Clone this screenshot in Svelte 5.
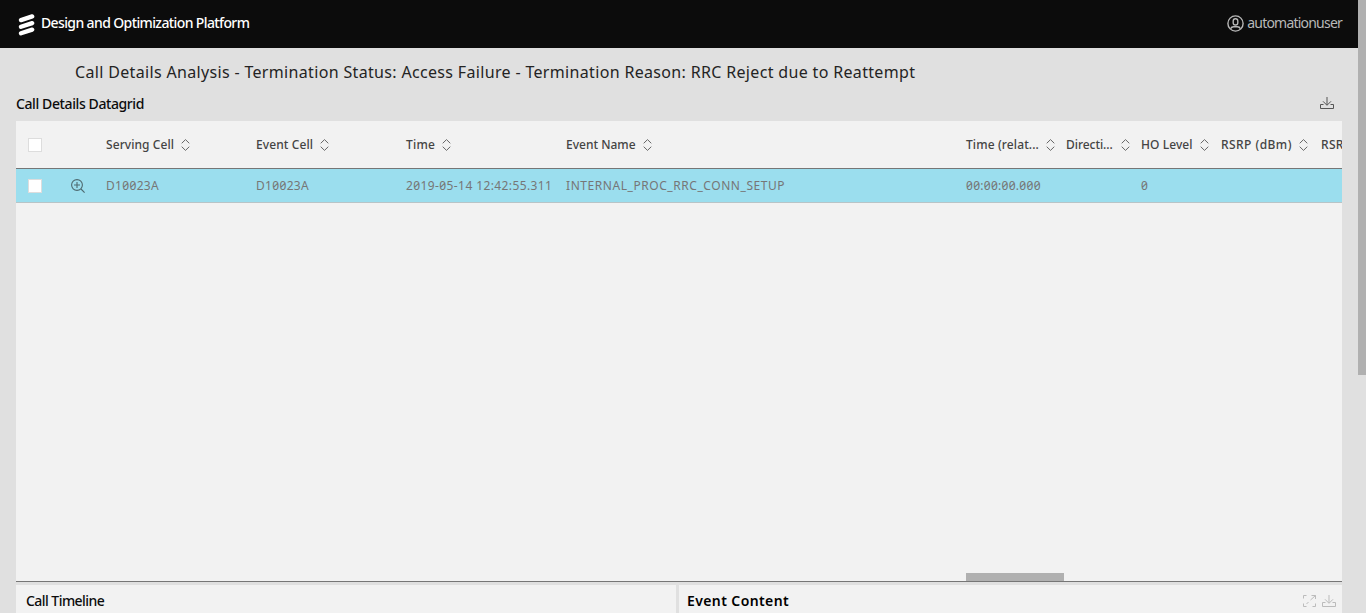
<script>
  const columns = [
    { name: 'Serving Cell', width: 150, value: 'D10023A', ls: 0.07, vls: 0.32 },
    { name: 'Event Cell', width: 150, value: 'D10023A', ls: 0.1, vls: 0.32 },
    { name: 'Time', width: 160, value: '2019-05-14 12:42:55.311', ls: 0.2, vls: 0.4 },
    { name: 'Event Name', width: 400, value: 'INTERNAL_PROC_RRC_CONN_SETUP', ls: 0, vls: 0.56 },
    { name: 'Time (relat...', width: 100, value: '00:00:00.000', ls: 0.12, vls: 0.28, clipped: true },
    { name: 'Directi...', width: 75, value: '', ls: -0.05, vls: 0, clipped: true },
    { name: 'HO Level', width: 80, value: '0', ls: 0.07, vls: 0 },
    { name: 'RSRP (dBm)', width: 100, value: '', ls: 0.45, vls: 0 },
    { name: 'RSRQ (dB)', width: 100, value: '', ls: 0.3, vls: 0 }
  ];
</script>

{#snippet download()}
  <svg class="download" width="14" height="12" viewBox="0 0 14 12" fill="none" stroke="currentColor">
    <path d="M3.5 7.5H.5v4h13v-4h-3M7 0v8M3 4.3l4 4 4-4" />
  </svg>
{/snippet}

<div class="page">
  <div class="main">
    <header>
      <svg class="logo" width="18" height="22" viewBox="0 0 18 22" stroke="#fff" stroke-width="4.3" stroke-linecap="round">
        <path d="M3 6.1 14.2 2.4M3 12.8 14.2 9.1M3 19.3 14.2 15.6" />
      </svg>
      <span class="brand">Design and Optimization Platform</span>
      <div class="user">
        <svg width="17" height="17" viewBox="0 0 17 17" fill="none" stroke="currentColor" stroke-width="1.4">
          <circle cx="8.5" cy="8.5" r="7.6" />
          <rect x="6.2" y="3.8" width="4.6" height="6.2" rx="2.2" />
          <path d="M3.6 13.8c.6-1.5 1.7-2 3-2h3.8c1.3 0 2.4.5 3 2" />
        </svg>
        <span>automationuser</span>
      </div>
    </header>

    <h1>Call Details Analysis - Termination Status: Access Failure - Termination Reason: RRC Reject due to Reattempt</h1>

    <div class="caption">
      <h2>Call Details Datagrid</h2>
      {@render download()}
    </div>

    <section class="grid">
      <div class="row head">
        <div class="check"><i></i></div>
        <div class="zoom"></div>
        {#each columns as col}
          <div class="cell" class:clipped={col.clipped} style:width="{col.width}px">
            <span style:letter-spacing="{col.ls}px">{col.name}</span>
            <svg width="9" height="12" viewBox="0 0 9 12" fill="none" stroke="#666" stroke-width="1">
              <path d="M.7 4.3 4.5.6l3.8 3.7M.7 7.7l3.8 3.7 3.8-3.7" />
            </svg>
          </div>
        {/each}
      </div>
      <div class="row data">
        <div class="check"><i></i></div>
        <div class="zoom">
          <svg width="14" height="14" viewBox="0 0 14 14" fill="none" stroke="#4e6a70" stroke-width="1.1">
            <circle cx="6" cy="6" r="5.4" /><path d="M10 10l3.6 3.6M3 6h6M6 3v6" />
          </svg>
        </div>
        {#each columns as col}
          <div class="cell" style:width="{col.width}px"><span style:letter-spacing="{col.vls}px">{col.value}</span></div>
        {/each}
      </div>
      <div class="hscroll"></div>
    </section>

    <div class="panels">
      <section class="timeline"><h2>Call Timeline</h2></section>
      <section class="content">
        <h2>Event Content</h2>
        <div class="tools">
          <svg width="13" height="12" viewBox="0 0 13 12" fill="none" stroke="currentColor">
            <path d="M.5 3.5v-3h3M.5 8.5v3h3M12.500 8.5v3h-3M8.500.5h4v3.500M7.500 5l5-4.500M5.500 7l-2 2" />
          </svg>
          {@render download()}
        </div>
      </section>
    </div>
  </div>
  <div class="vscroll"></div>
</div>

<style>
  :global(body) { margin: 0; overflow: hidden; background: #e0e0e0; }
  .page { display: flex; width: 1366px; height: 613px; overflow: hidden; background: #e0e0e0; font-family: "Noto Sans", sans-serif; color: #0c0c0c; }
  .main { width: 1358px; display: flex; flex-direction: column; }
  .vscroll { width: 8px; height: 375px; background: #b0b0b0; }
  header { height: 48px; flex: none; display: flex; align-items: center; background: #0c0c0c; color: #fff; padding: 0 16px 3px 18px; box-sizing: border-box; }
  .logo { margin-top: 4px; }
  .brand { margin-left: 5px; font-size: 14px; font-weight: 500; letter-spacing: -.62px; white-space: nowrap; }
  .user { margin-left: auto; display: flex; align-items: center; gap: 3px; color: #b8b8b8; font-size: 14px; letter-spacing: -.79px; }
  .user svg { margin-top: 2px; }
  h1, h2 { margin: 0; white-space: nowrap; }
  h1 { height: 48px; flex: none; padding-left: 75px; font-size: 16px; line-height: 48px; font-weight: 400; letter-spacing: .335px; color: #242424; }
  .caption { height: 25px; flex: none; display: flex; justify-content: space-between; padding: 0 24px 0 16px; }
  h2 { font-size: 14px; line-height: 16px; font-weight: 500; letter-spacing: -.4px; }
  .caption .download { margin-top: 1px; color: #555; }
  .grid { position: relative; width: 1326px; height: 460px; flex: none; margin-left: 16px; overflow: hidden; background: #f2f2f2; border-bottom: 1px solid #767676; }
  .row { display: flex; width: 1410px; align-items: center; box-sizing: border-box; }
  .head { height: 48px; border-bottom: 1px solid #767676; font-size: 12px; font-weight: 500; color: #444; }
  .data { height: 34px; background: #9bdeee; border-bottom: 1px solid #b8c4c7; font-size: 12px; color: #767676; font-feature-settings: "zero"; }
  .check { width: 54px; padding-left: 12px; box-sizing: border-box; flex: none; }
  .check i { display: block; width: 12px; height: 12px; background: #fff; border: 1px solid #ddd; }
  .zoom { width: 36px; height: 14px; flex: none; padding-left: 1px; box-sizing: border-box; }
  .cell { display: flex; align-items: center; gap: 7px; flex: none; white-space: nowrap; }
  .clipped { justify-content: space-between; padding-right: 11px; box-sizing: border-box; }
  .hscroll { position: absolute; left: 950px; bottom: 0; width: 98px; height: 8px; background: #b0b0b0; }
  .panels { display: flex; gap: 3px; margin: 3px 16px 0; height: 28px; }
  .timeline { width: 660px; background: #f2f2f2; padding: 8px 0 0 10px; box-sizing: border-box; }
  .timeline h2 { letter-spacing: -.55px; }
  .content { flex: 1; display: flex; justify-content: space-between; background: #f2f2f2; padding: 8px 6px 0 8px; box-sizing: border-box; }
  .content h2 { letter-spacing: .4px; font-weight: 600; color: #000; }
  .tools { display: flex; gap: 6px; padding-top: 2px; color: #bbb; }
</style>
